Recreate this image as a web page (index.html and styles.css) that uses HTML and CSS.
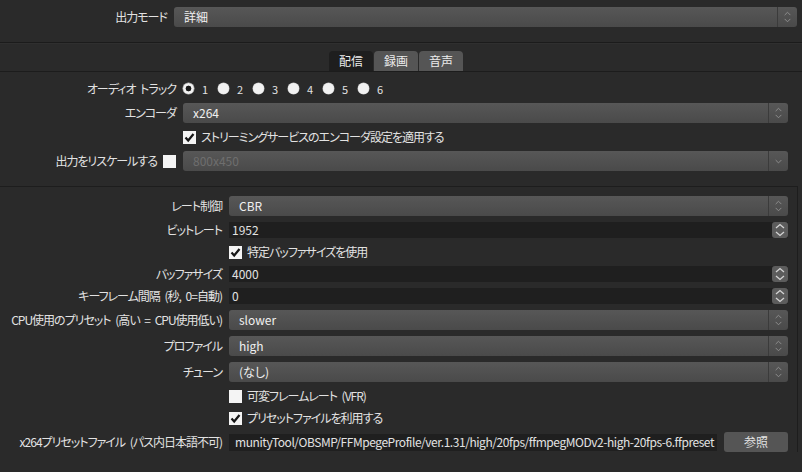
FILE: index.html
```html
<!DOCTYPE html>
<html lang="ja">
<head>
<meta charset="utf-8">
<link rel="stylesheet" href="styles.css">
</head>
<body>
<div class="mode-row">
  <div class="lbl">出力モード</div>
  <div class="combo wide"><span class="ctext">詳細</span><span class="arrow"><svg width="20" height="20" viewBox="0 0 20 20"><polyline points="7,8 10,5 13,8" class="chev"/><polyline points="7,12 10,15 13,12" class="chev"/></svg></span></div>
</div>
<div class="sep"></div>
<div class="tabbar">
  <div class="tab active">配信</div>
  <div class="tab">録画</div>
  <div class="tab">音声</div>
</div>
<div class="pane">
  <div class="form">
    <div class="lbl">オーディオ トラック</div>
    <div class="radios">
      <span class="ritem"><span class="radio on"></span>1</span>
      <span class="ritem"><span class="radio"></span>2</span>
      <span class="ritem"><span class="radio"></span>3</span>
      <span class="ritem"><span class="radio"></span>4</span>
      <span class="ritem"><span class="radio"></span>5</span>
      <span class="ritem"><span class="radio"></span>6</span>
    </div>

    <div class="lbl">エンコーダ</div>
    <div class="combo"><span class="ctext">x264</span><span class="arrow"><svg width="20" height="20" viewBox="0 0 20 20"><polyline points="7,8 10,5 13,8" class="chev"/><polyline points="7,12 10,15 13,12" class="chev"/></svg></span></div>

    <div class="lbl"></div>
    <div class="check"><span class="box"><svg width="13" height="13" viewBox="0 0 13 13"><polyline points="2.5,6.5 5.2,9.5 10.5,3" class="tick"/></svg></span>ストリーミングサービスのエンコーダ設定を適用する</div>

    <div class="lbl lblcheck">出力をリスケールする<span class="box"></span></div>
    <div class="combo disabled"><span class="ctext">800x450</span><span class="arrow"><svg width="20" height="20" viewBox="0 0 20 20"><polyline points="7,9 10,12 13,9" class="chev"/></svg></span></div>
  </div>

  <div class="group">
    <div class="form gform">
      <div class="lbl">レート制御</div>
      <div class="combo"><span class="ctext">CBR</span><span class="arrow"><svg width="20" height="20" viewBox="0 0 20 20"><polyline points="7,8 10,5 13,8" class="chev"/><polyline points="7,12 10,15 13,12" class="chev"/></svg></span></div>

      <div class="lbl">ビットレート</div>
      <div class="spin"><span class="stext">1952</span><span class="sbtn"><svg width="16" height="16" viewBox="0 0 16 16"><polyline points="4,6 8,2.5 12,6" class="schev"/><polyline points="4,10 8,13.5 12,10" class="schev"/></svg></span></div>

      <div class="lbl"></div>
      <div class="check"><span class="box"><svg width="13" height="13" viewBox="0 0 13 13"><polyline points="2.5,6.5 5.2,9.5 10.5,3" class="tick"/></svg></span>特定バッファサイズを使用</div>

      <div class="lbl">バッファサイズ</div>
      <div class="spin"><span class="stext">4000</span><span class="sbtn"><svg width="16" height="16" viewBox="0 0 16 16"><polyline points="4,6 8,2.5 12,6" class="schev"/><polyline points="4,10 8,13.5 12,10" class="schev"/></svg></span></div>

      <div class="lbl">キーフレーム間隔 (秒, 0=自動)</div>
      <div class="spin"><span class="stext">0</span><span class="sbtn"><svg width="16" height="16" viewBox="0 0 16 16"><polyline points="4,6 8,2.5 12,6" class="schev"/><polyline points="4,10 8,13.5 12,10" class="schev"/></svg></span></div>

      <div class="lbl">CPU使用のプリセット (高い = CPU使用低い)</div>
      <div class="combo"><span class="ctext">slower</span><span class="arrow"><svg width="20" height="20" viewBox="0 0 20 20"><polyline points="7,8 10,5 13,8" class="chev"/><polyline points="7,12 10,15 13,12" class="chev"/></svg></span></div>

      <div class="lbl">プロファイル</div>
      <div class="combo"><span class="ctext">high</span><span class="arrow"><svg width="20" height="20" viewBox="0 0 20 20"><polyline points="7,8 10,5 13,8" class="chev"/><polyline points="7,12 10,15 13,12" class="chev"/></svg></span></div>

      <div class="lbl">チューン</div>
      <div class="combo"><span class="ctext">(なし)</span><span class="arrow"><svg width="20" height="20" viewBox="0 0 20 20"><polyline points="7,8 10,5 13,8" class="chev"/><polyline points="7,12 10,15 13,12" class="chev"/></svg></span></div>

      <div class="lbl"></div>
      <div class="check"><span class="box"></span>可変フレームレート (VFR)</div>

      <div class="lbl"></div>
      <div class="check"><span class="box"><svg width="13" height="13" viewBox="0 0 13 13"><polyline points="2.5,6.5 5.2,9.5 10.5,3" class="tick"/></svg></span>プリセットファイルを利用する</div>

      <div class="lbl">x264プリセットファイル (パス内日本語不可)</div>
      <div class="pathrow">
        <div class="edit"><span>munityTool/OBSMP/FFMpegeProfile/ver.1.31/high/20fps/ffmpegMODv2-high-20fps-6.ffpreset</span></div>
        <div class="btn">参照</div>
      </div>
    </div>
  </div>
</div>
</body>
</html>
```

FILE: styles.css
```css
* { box-sizing: border-box; }

body {
  margin: 0;
  width: 802px;
  height: 472px;
  overflow: hidden;
  background: #2a2a2a;
  color: #e2e2e2;
  font-family: "Noto Sans CJK JP", "Noto Sans", sans-serif;
  font-size: 12px;
  font-feature-settings: "palt";
  line-height: 16px;
}

.mode-row {
  display: grid;
  grid-template-columns: 167px 623px;
  grid-template-rows: 20px;
  column-gap: 7px;
  padding-top: 7px;
  height: 42px;
}

.lbl {
  text-align: right;
  white-space: nowrap;
  align-self: center;
  letter-spacing: -1px;
  word-spacing: 3px;
}

.mode-row .lbl { line-height: 20px; }

.sep {
  height: 2px;
  border-top: 1px solid #1b1b1b;
  border-bottom: 1px solid #2f2f2f;
}

.tabbar {
  margin-top: 7px;
  display: flex;
  justify-content: center;
  gap: 1px;
  padding-right: 10px;
  border-bottom: 1px solid #1c1c1c;
}

.tab {
  width: 44px;
  height: 20px;
  line-height: 20px;
  text-align: center;
  background: #555555;
  border-radius: 4px 4px 0 0;
  color: #ececec;
}

.tab.active { background: #1e1e1e; }

.pane { padding-top: 8px; }

.form {
  display: grid;
  grid-template-columns: 176px 605px;
  column-gap: 7px;
  row-gap: 6px;
  align-items: center;
}

.radios {
  display: flex;
  height: 17px;
  align-items: center;
}

.ritem {
  display: flex;
  align-items: center;
  gap: 8px;
  width: 35px;
  font-size: 11px;
}

.radio {
  width: 11px;
  height: 11px;
  border-radius: 50%;
  background: #f2f2f2;
  box-shadow: 0 0 0 0.5px #bbb;
}

.radio.on {
  background: radial-gradient(circle, #1a1a1a 0 2.6px, #f2f2f2 3.2px);
}

.combo {
  height: 20px;
  display: flex;
  align-items: center;
  justify-content: space-between;
  background: linear-gradient(#575757, #4a4a4a);
  border-radius: 3px;
  color: #f0f0f0;
}

.combo.disabled { color: #6e6e6e; }

.ctext { padding-left: 10px; }

.arrow {
  width: 20px;
  height: 20px;
  border-left: 1px solid #3b3b3b;
  display: flex;
}

.chev {
  fill: none;
  stroke: #8e8e8e;
  stroke-width: 1;
}

.check {
  display: flex;
  align-items: center;
  gap: 5px;
  height: 16px;
  white-space: nowrap;
  letter-spacing: -1px;
  word-spacing: 3px;
}

.box {
  width: 13px;
  height: 13px;
  background: #f4f4f4;
  display: inline-flex;
  flex: none;
}

.tick {
  fill: none;
  stroke: #151515;
  stroke-width: 2.2;
}

.lblcheck {
  display: flex;
  justify-content: flex-end;
  align-items: center;
  gap: 6px;
}

.group {
  margin-top: 15px;
  margin-right: 4px;
  border-top: 1px solid #1d1d1d;
  border-right: 1px solid #1d1d1d;
  padding-top: 9px;
}

.gform {
  grid-template-columns: 222px 559px;
}

.spin {
  height: 16px;
  background: #1f1f1f;
  display: flex;
  align-items: center;
  justify-content: space-between;
}

.stext { padding-left: 3px; }

.sbtn {
  width: 16px;
  height: 16px;
  background: #5c5c5c;
  border-radius: 3px;
  display: flex;
}

.schev {
  fill: none;
  stroke: #d4d4d4;
  stroke-width: 1.3;
}

.pathrow {
  display: flex;
  align-items: center;
  gap: 7px;
  height: 20px;
}

.edit {
  width: 488px;
  height: 17px;
  background: #1f1f1f;
  display: flex;
  justify-content: flex-end;
  align-items: center;
  overflow: hidden;
  white-space: nowrap;
  padding-right: 3px;
  letter-spacing: -0.45px;
}

.btn {
  width: 64px;
  height: 20px;
  line-height: 20px;
  text-align: center;
  background: #555555;
  border-radius: 3px;
}
```
